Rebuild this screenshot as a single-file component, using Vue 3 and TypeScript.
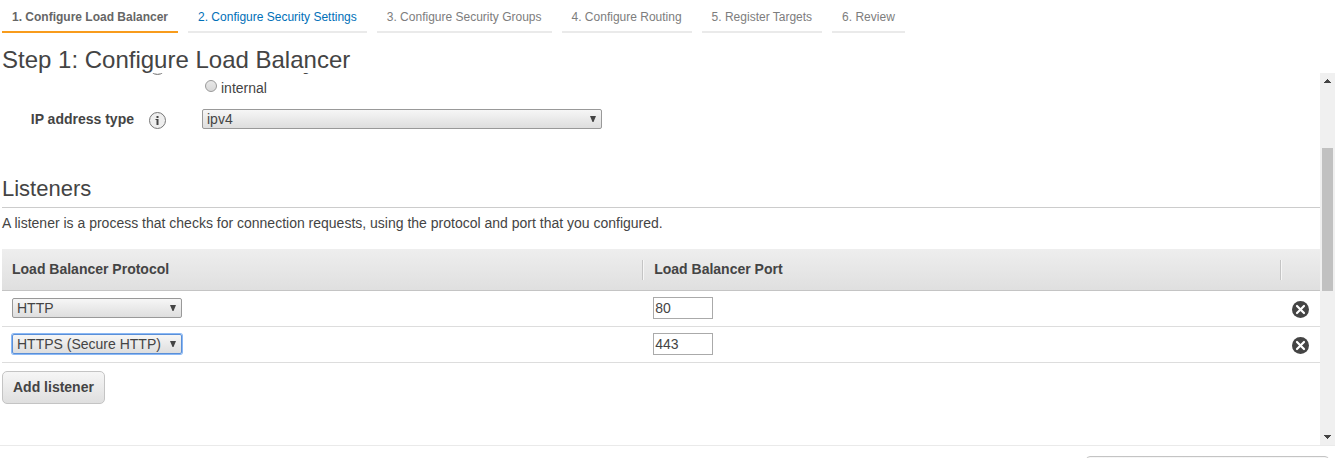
<script setup lang="ts">
import { ref } from 'vue'

interface Step {
  label: string
  state: 'current' | 'open' | 'pending'
}

interface Listener {
  id: number
  protocol: string
  port: string
  focused: boolean
}

const steps: Step[] = [
  { label: '1. Configure Load Balancer', state: 'current' },
  { label: '2. Configure Security Settings', state: 'open' },
  { label: '3. Configure Security Groups', state: 'pending' },
  { label: '4. Configure Routing', state: 'pending' },
  { label: '5. Register Targets', state: 'pending' },
  { label: '6. Review', state: 'pending' },
]

const protocols = ['HTTP', 'HTTPS (Secure HTTP)']
const scheme = ref('internet-facing')
const ipType = ref('ipv4')
const listeners = ref<Listener[]>([
  { id: 1, protocol: protocols[0], port: '80', focused: false },
  { id: 2, protocol: protocols[1], port: '443', focused: true },
])

function addListener() {
  const id = Math.max(0, ...listeners.value.map((l) => l.id)) + 1
  listeners.value.push({ id, protocol: protocols[0], port: '80', focused: false })
}

function removeListener(id: number) {
  listeners.value = listeners.value.filter((l) => l.id !== id)
}
</script>

<template>
  <div class="wizard">
    <nav class="steps">
      <a v-for="step in steps" :key="step.label" href="#" class="step" :class="step.state">{{ step.label }}</a>
    </nav>
    <h1 class="title">Step 1: Configure Load Balancer</h1>

    <div class="scroller">
      <main class="content">
        <div class="field">
          <span class="field-label"></span>
          <button type="button" class="info" aria-label="About scheme">
            <svg viewBox="0 0 17 17" width="17" height="17">
              <circle cx="8.5" cy="8.5" r="8" fill="#eee" stroke="#777" />
              <path d="M7.5 4h2v2h-2zM6.5 7h3v6h-2v-5h-1z" fill="#444" />
            </svg>
          </button>
          <div class="radios">
            <label class="radio"><input v-model="scheme" type="radio" name="scheme" value="internet-facing" />internet-facing</label>
            <label class="radio"><input v-model="scheme" type="radio" name="scheme" value="internal" />internal</label>
          </div>
        </div>
        <div class="field ip">
          <label class="field-label" for="ip-type">IP address type</label>
          <button type="button" class="info" aria-label="About IP address type">
            <svg viewBox="0 0 17 17" width="17" height="17">
              <circle cx="8.5" cy="8.5" r="8" fill="#eee" stroke="#777" />
              <path d="M7.5 4h2v2h-2zM6.5 7h3v6h-2v-5h-1z" fill="#444" />
            </svg>
          </button>
          <div class="select wide">
            <select id="ip-type" v-model="ipType">
              <option>ipv4</option>
              <option>dualstack</option>
            </select>
            <svg class="arrow" viewBox="0 0 6 6" width="6" height="6"><path d="M0 0h6L3.5 6h-1z" fill="#444" /></svg>
          </div>
        </div>

        <h2 class="heading">Listeners</h2>
        <p class="description">A listener is a process that checks for connection requests, using the protocol and port that you configured.</p>

        <table class="listeners">
          <colgroup>
            <col class="col-protocol" />
            <col />
            <col class="col-remove" />
          </colgroup>
          <thead>
            <tr>
              <th scope="col"><div class="head split">Load Balancer Protocol</div></th>
              <th scope="col"><div class="head split second">Load Balancer Port</div></th>
              <td></td>
            </tr>
          </thead>
          <tbody>
            <tr v-for="item in listeners" :key="item.id">
              <td class="cell-protocol">
                <div class="select" :class="{ focused: item.focused }">
                  <select v-model="item.protocol" aria-label="Load Balancer Protocol">
                    <option v-for="p in protocols" :key="p">{{ p }}</option>
                  </select>
                  <svg class="arrow" viewBox="0 0 6 6" width="6" height="6"><path d="M0 0h6L3.5 6h-1z" fill="#444" /></svg>
                </div>
              </td>
              <td class="cell-port"><input v-model="item.port" class="port" type="text" aria-label="Load Balancer Port" /></td>
              <td class="cell-remove">
                <button type="button" class="remove" aria-label="Remove listener" @click="removeListener(item.id)">
                  <svg viewBox="0 0 17 17" width="17" height="17">
                    <circle cx="8.5" cy="8.5" r="8.5" fill="#444" />
                    <path d="M5 5l7 7M12 5l-7 7" stroke="#fff" stroke-width="2.2" stroke-linecap="round" />
                  </svg>
                </button>
              </td>
            </tr>
          </tbody>
        </table>
        <button type="button" class="btn" @click="addListener">Add listener</button>
      </main>

      <div class="scrollbar" aria-hidden="true">
        <svg class="cap" viewBox="0 0 15 15" width="15" height="15" shape-rendering="crispEdges"><path d="M7 6h1v1h1v1h1v1h1v1H4V9h1V8h1V7h1z" fill="#444" /></svg>
        <div class="track"><div class="thumb"></div></div>
        <svg class="cap" viewBox="0 0 15 15" width="15" height="15" shape-rendering="crispEdges"><path d="M4 5h7v1h-1v1H9v1H8v1H7V8H6V7H5V6H4z" fill="#444" /></svg>
      </div>
    </div>

    <footer class="footer">
      <button type="button" class="btn next" aria-label="Next"></button>
    </footer>
  </div>
</template>

<style>
body {
  margin: 0;
  background: #fff;
}
</style>

<style scoped>
.wizard {
  display: flex;
  flex-direction: column;
  height: 100vh;
  overflow: hidden;
  font: 14px/20px "Liberation Sans", Arial, sans-serif;
  color: #444;
}
.wizard * {
  box-sizing: border-box;
}
.wizard svg {
  display: block;
}
.steps {
  display: flex;
  flex: none;
  gap: 10px;
  padding-left: 2px;
}
.step {
  padding: 7px 10px 4px;
  border-bottom: 2px solid #eaeaea;
  font-size: 12px;
  color: #7d7d7d;
  text-decoration: none;
  white-space: nowrap;
}
.step.current {
  border-color: #f89c1c;
  font-weight: bold;
  color: #666;
}
.step.open {
  color: #0070b8;
}
.title {
  flex: none;
  margin: 0;
  padding: 14px 0 0 2px;
  font-size: 24px;
  line-height: 26px;
  font-weight: normal;
}
.scroller {
  display: flex;
  flex: 1;
  min-height: 0;
  overflow: hidden;
}
.content {
  flex: 1;
  min-width: 0;
  margin-top: -18px;
  padding-left: 2px;
}
.field {
  display: grid;
  grid-template-columns: 132px 17px minmax(0, 421px);
  column-gap: 15px;
}
.field-label {
  font-weight: bold;
  text-align: right;
}
.info,
.remove {
  display: block;
  width: 17px;
  height: 17px;
  margin: 0;
  padding: 0;
  border: 0;
  background: none;
}
.info {
  margin-top: 3px;
}
.radios,
.select.wide {
  margin-left: 21px;
}
.radio {
  display: flex;
  gap: 4px;
  line-height: 22px;
}
.radio input {
  appearance: none;
  width: 12px;
  height: 12px;
  margin: 3px 0 0 3px;
  border: 1px solid #999;
  border-radius: 50%;
  background: linear-gradient(#e8e8e8, #d8d8d8);
}
.ip {
  margin-top: 10px;
}
.select {
  position: relative;
  width: 170px;
  height: 20px;
}
.select.wide {
  width: auto;
}
.select select {
  appearance: none;
  display: block;
  width: 100%;
  height: 20px;
  margin: 0;
  padding: 0 20px 0 4px;
  border: 1px solid #999;
  border-radius: 2px;
  outline: none;
  background: linear-gradient(#f6f6f6, #dedede);
  font: inherit;
  line-height: 18px;
  color: #444;
}
.select.focused select {
  border-color: #5a8fd8;
  box-shadow: 0 0 0 1px #8ab8f5;
}
.arrow {
  position: absolute;
  top: 7px;
  right: 6px;
  pointer-events: none;
}
.heading {
  margin: 46px 0 0;
  padding-bottom: 4px;
  border-bottom: 1px solid #ccc;
  font-size: 22px;
  line-height: 28px;
  font-weight: normal;
}
.description {
  margin: 5px 0 16px;
}
.listeners {
  width: 100%;
  table-layout: fixed;
  border-collapse: separate;
  border-spacing: 0;
}
.col-protocol {
  width: 48.65%;
}
.col-remove {
  width: 39px;
}
.listeners thead {
  background: linear-gradient(#eee, #dfdfdf);
}
.listeners thead th,
.listeners thead td {
  height: 42px;
  padding: 0;
  border-bottom: 1px solid #c4c4c4;
  text-align: left;
}
.head {
  height: 20px;
  padding-left: 10px;
  line-height: 18px;
}
.head.second {
  padding-left: 11px;
}
.split {
  border-right: 1px solid #c4c4c4;
  box-shadow: 1px 0 #f6f6f6;
}
.listeners tbody td {
  height: 36px;
  padding: 0 10px;
  border-bottom: 1px solid #ddd;
  vertical-align: top;
}
.listeners .cell-protocol {
  padding-top: 7px;
}
.listeners .cell-port {
  padding-top: 6px;
}
.listeners .cell-remove {
  padding-top: 10px;
  padding-left: 11px;
}
.port {
  display: block;
  width: 60px;
  height: 22px;
  margin: 0;
  padding: 0 1px;
  border: 1px solid #aaa;
  border-radius: 0;
  background: #fff;
  font: inherit;
  color: #444;
}
.btn {
  display: block;
  height: 33px;
  margin: 8px 0 0;
  padding: 0 10px 2px;
  border: 1px solid #c4c4c4;
  border-radius: 5px;
  background: linear-gradient(#f6f6f6, #dfdfdf);
  font: bold 14px/20px "Liberation Sans", Arial, sans-serif;
  color: #444;
}
.scrollbar {
  display: flex;
  flex: none;
  flex-direction: column;
  width: 15px;
  background: #f0f0f0;
}
.cap {
  flex: none;
}
.track {
  flex: 1;
  padding: 60px 2px 0;
}
.thumb {
  height: 143px;
  background: #c1c1c1;
}
.footer {
  display: flex;
  flex: none;
  justify-content: flex-end;
  height: 13px;
  padding-right: 6px;
  border-top: 1px solid #eaeaea;
}
.next {
  flex: none;
  width: 243px;
  margin-top: 10px;
  border-radius: 4px;
}
</style>
